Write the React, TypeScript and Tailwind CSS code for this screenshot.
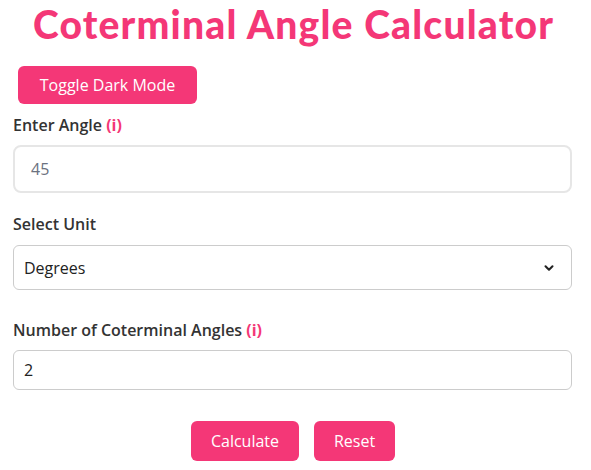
import { ChevronDown } from 'lucide-react';

const pink = 'bg-[#f43777]';

export default function App() {
  return (
    <div className="w-[591px] h-[470px] bg-white overflow-hidden font-['Open_Sans',sans-serif] text-[#333]">
      <h1 className="pt-[2px] pr-[4px] text-center text-[39px] leading-[44px] font-black text-[#f43777] font-['Lato',sans-serif] tracking-[1.2px]">
        Coterminal Angle Calculator
      </h1>

      <div className="px-[13px]">
        <button className={`mt-[20px] ml-[5px] h-[38px] w-[179px] rounded-md ${pink} text-white text-[16px]`}>
          Toggle Dark Mode
        </button>

        <label className="block mt-[10px] text-[16px] font-semibold leading-[22px]">
          Enter Angle <span className="text-[#f43777] font-bold">(i)</span>
        </label>
        <div className="mt-[9px] w-[559px] h-[48px] rounded-lg border-2 border-[#e6e6e6] flex items-center pl-[16px] text-[16px] text-[#6b7280]">
          45
        </div>

        <label className="block mt-[20px] text-[16px] font-semibold leading-[22px]">Select Unit</label>
        <div className="mt-[10px] w-[559px] h-[45px] rounded-md border border-[#cccccc] flex items-center justify-between pl-[10px] pr-[15px] text-[16px] text-[#222]">
          <span>Degrees</span>
          <ChevronDown className="w-[14px] h-[14px]" strokeWidth={3.5} />
        </div>

        <label className="block mt-[29px] text-[16px] font-semibold leading-[22px]">
          Number of Coterminal Angles <span className="text-[#f43777] font-bold">(i)</span>
        </label>
        <div className="mt-[9px] w-[559px] h-[40px] rounded-md border border-[#cccccc] flex items-center pl-[10px] text-[16px] text-[#222]">
          2
        </div>

        <div className="mt-[31px] flex justify-center gap-[15px] pr-[5px]">
          <button className={`h-[40px] w-[108px] rounded-md ${pink} text-white text-[16px]`}>Calculate</button>
          <button className={`h-[40px] w-[81px] rounded-md ${pink} text-white text-[16px]`}>Reset</button>
        </div>
      </div>
    </div>
  );
}
